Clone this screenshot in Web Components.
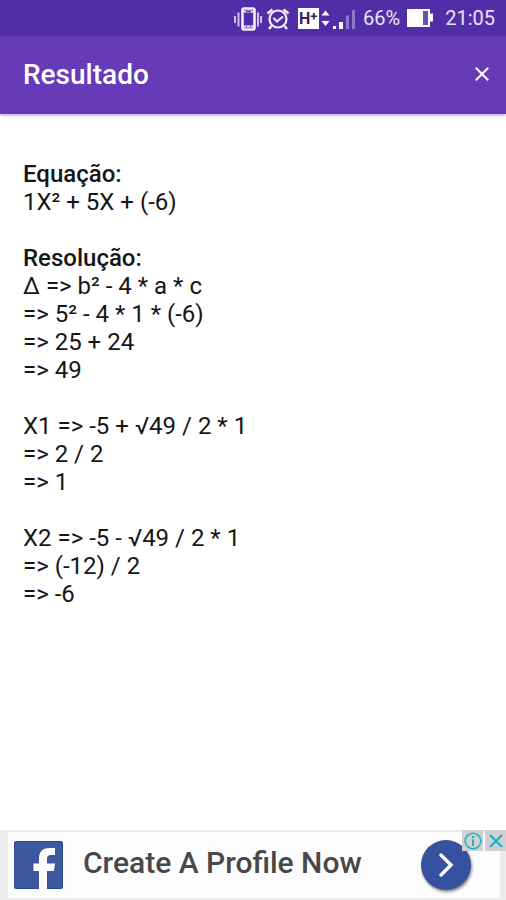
<!DOCTYPE html>
<html lang="pt-BR">
<head>
<meta charset="utf-8">
<meta name="viewport" content="width=device-width, initial-scale=1">
<title>Resultado</title>
<style>
  body { margin: 0; background: #fff; font-family: Roboto, "Liberation Sans", sans-serif; }
</style>
</head>
<body>
<result-screen></result-screen>
<script>
const define = (name, html) => {
  const template = document.createElement('template');
  template.innerHTML = html;
  customElements.define(name, class extends HTMLElement {
    constructor() {
      super();
      this.attachShadow({ mode: 'open' }).append(template.content.cloneNode(true));
    }
  });
};

define('status-bar', `
<style>
  :host { display: flex; align-items: center; justify-content: flex-end; height: 36px; padding-right: 11px; box-sizing: border-box; background: #512da8; color: #e9e2f6; font-size: 20px; line-height: 24px; }
  svg { display: block; flex: none; }
  .level { margin: 0 6px 0 8px; }
  time { margin-left: 11px; }
</style>
<svg width="122" height="28" viewBox="0 0 122 28" fill="none" stroke="#f3eefb" aria-hidden="true">
  <path d="M2 12v7M5.500 8.500v14M25 8.500v14M28 12v7" stroke-width="2" stroke="#cfc0ec"/>
  <rect x="9.500" y="4.500" width="12" height="21" rx="1.500" stroke-width="2.600"/>
  <path d="M10 7.500h11M10 22.500h11" stroke-width="2"/>
  <path d="M13 22.500h1M17 22.500h1M13 7.500h5" stroke="#512da8"/>
  <circle cx="45" cy="15" r="8.500" stroke-width="2.200"/>
  <path d="M34.500 9.500l5-4M50.500 5.500l5 4M38.500 22l-2.500 3M51.500 22l2.500 3" stroke-width="2.600"/>
  <path d="M40.500 14l3.500 3.500 6-5" stroke-width="2.200"/>
  <rect x="65" y="4" width="21" height="21" fill="#fff" stroke="none"/>
  <text x="66" y="20" fill="#332063" stroke="none" font-size="16" font-weight="700">H<tspan font-size="13" dy="-3">+</tspan></text>
  <path d="M88.500 11.500l4-5 4 5zM88.500 17h8l-4 5z" fill="#fff" stroke="none"/>
  <path d="M100 22h3v3h-3zM106 18h4v7h-4z" fill="#fff" stroke="none"/>
  <path d="M113 11.500h3V25h-3zM119 6h3v19h-3z" fill="#8e76c9" stroke="none"/>
</svg>
<span class="level">66%</span>
<svg width="28" height="20" viewBox="0 0 28 20" aria-hidden="true">
  <path fill="#fff" d="M1 1h23v4.500h3v8h-3V19H1z"/><path fill="#6c4db5" d="M17 3h5v14h-5z"/>
</svg>
<time>21:05</time>
`);

define('app-bar', `
<style>
  :host { display: flex; align-items: center; justify-content: space-between; position: relative; height: 78px; padding: 0 14px 0 23px; box-sizing: border-box; background: #673ab7; color: #fff; box-shadow: 0 1px 3px #512da880; }
  h1 { margin: 0; font-size: 28px; line-height: 32px; font-weight: 500; }
  button { display: grid; place-items: center; width: 20px; height: 24px; padding: 0 0 2px; box-sizing: border-box; border: 0; background: none; color: inherit; }
</style>
<h1><slot></slot></h1>
<button type="button" aria-label="Fechar"><svg width="14" height="14" viewBox="0 0 14 14" fill="none" stroke="currentColor" stroke-width="2" aria-hidden="true"><path d="M.8.8l12.400 12.400M13.200.8L.8 13.200"/></svg></button>
`);

define('math-block', `
<style>
  :host { display: block; font-size: 24px; line-height: 28px; color: #161616; }
  ::slotted(h2) { margin: 0; font-size: inherit; line-height: inherit; font-weight: 500; }
  ::slotted(p) { margin: 0; }
</style>
<slot></slot>
`);

define('ad-banner', `
<style>
  :host { display: flex; position: relative; height: 70px; box-sizing: border-box; padding: 2px 6px 2px 8px; background: #ebebeb; }
  .ad { flex: 1; display: flex; align-items: center; padding: 0 29px 0 6px; background: #fdfdfd; color: #484848; text-decoration: none; }
  svg { display: block; flex: none; }
  .label { flex: 1; padding: 0 0 4px 20px; font-size: 30px; line-height: 34px; font-weight: 500; white-space: nowrap; }
  .go { display: grid; place-items: center; flex: none; width: 50px; height: 50px; border-radius: 50%; background: #3551a0; box-shadow: 1px 2px 3px #0007; }
  .choices { position: absolute; top: 0; right: 0; display: flex; gap: 2px; }
  button { display: grid; place-items: center; width: 21px; height: 21px; padding: 0; border: 0; background: #d0d0d0; color: #20b1c8; }
</style>
<a class="ad" href="#">
  <svg width="49" height="48" viewBox="0 0 49 48" aria-hidden="true">
    <rect width="49" height="48" rx="2" fill="#2d4b91"/><rect x="1" y="1" width="47" height="46" rx="1" fill="#3d589f"/>
    <path fill="#fff" d="M25 48V30h-5.500v-7.500H25v-5C25 10.500 29 7 35 7h6v7h-4c-3 0-4 1.200-4 4v4.500h8L40 30h-7v18z"/>
  </svg>
  <span class="label"><slot></slot></span>
  <span class="go"><svg width="16" height="24" viewBox="0 0 16 24" fill="none" stroke="#fff" stroke-width="3.400" stroke-linecap="round" aria-hidden="true"><path d="M3 2L13 12 3 22"/></svg></span>
</a>
<div class="choices">
  <button type="button" aria-label="Informações do anúncio"><svg width="18" height="18" viewBox="0 0 18 18" fill="none" stroke="currentColor" stroke-width="1.600" aria-hidden="true"><circle cx="9" cy="9" r="7.800"/><path d="M9 4v2.200M9 7.500V14" stroke-width="2"/></svg></button>
  <button type="button" aria-label="Fechar anúncio"><svg width="14" height="14" viewBox="0 0 14 14" fill="none" stroke="currentColor" stroke-width="2.200" aria-hidden="true"><path d="M1 1l12 12M13 1L1 13"/></svg></button>
</div>
`);

define('result-screen', `
<style>
  :host { display: flex; flex-direction: column; min-height: 100vh; }
  main { flex: 1; display: flex; flex-direction: column; gap: 28px; padding: 46px 23px; }
</style>
<status-bar></status-bar>
<app-bar>Resultado</app-bar>
<main>
  <math-block><h2>Equação:</h2><p>1X² + 5X + (-6)</p></math-block>
  <math-block><h2>Resolução:</h2><p>Δ =&gt; b² - 4 * a * c</p><p>=&gt; 5² - 4 * 1 * (-6)</p><p>=&gt; 25 + 24</p><p>=&gt; 49</p></math-block>
  <math-block><p>X1 =&gt; -5 + √49 / 2 * 1</p><p>=&gt; 2 / 2</p><p>=&gt; 1</p></math-block>
  <math-block><p>X2 =&gt; -5 - √49 / 2 * 1</p><p>=&gt; (-12) / 2</p><p>=&gt; -6</p></math-block>
</main>
<ad-banner>Create A Profile Now</ad-banner>
`);
</script>
</body>
</html>
